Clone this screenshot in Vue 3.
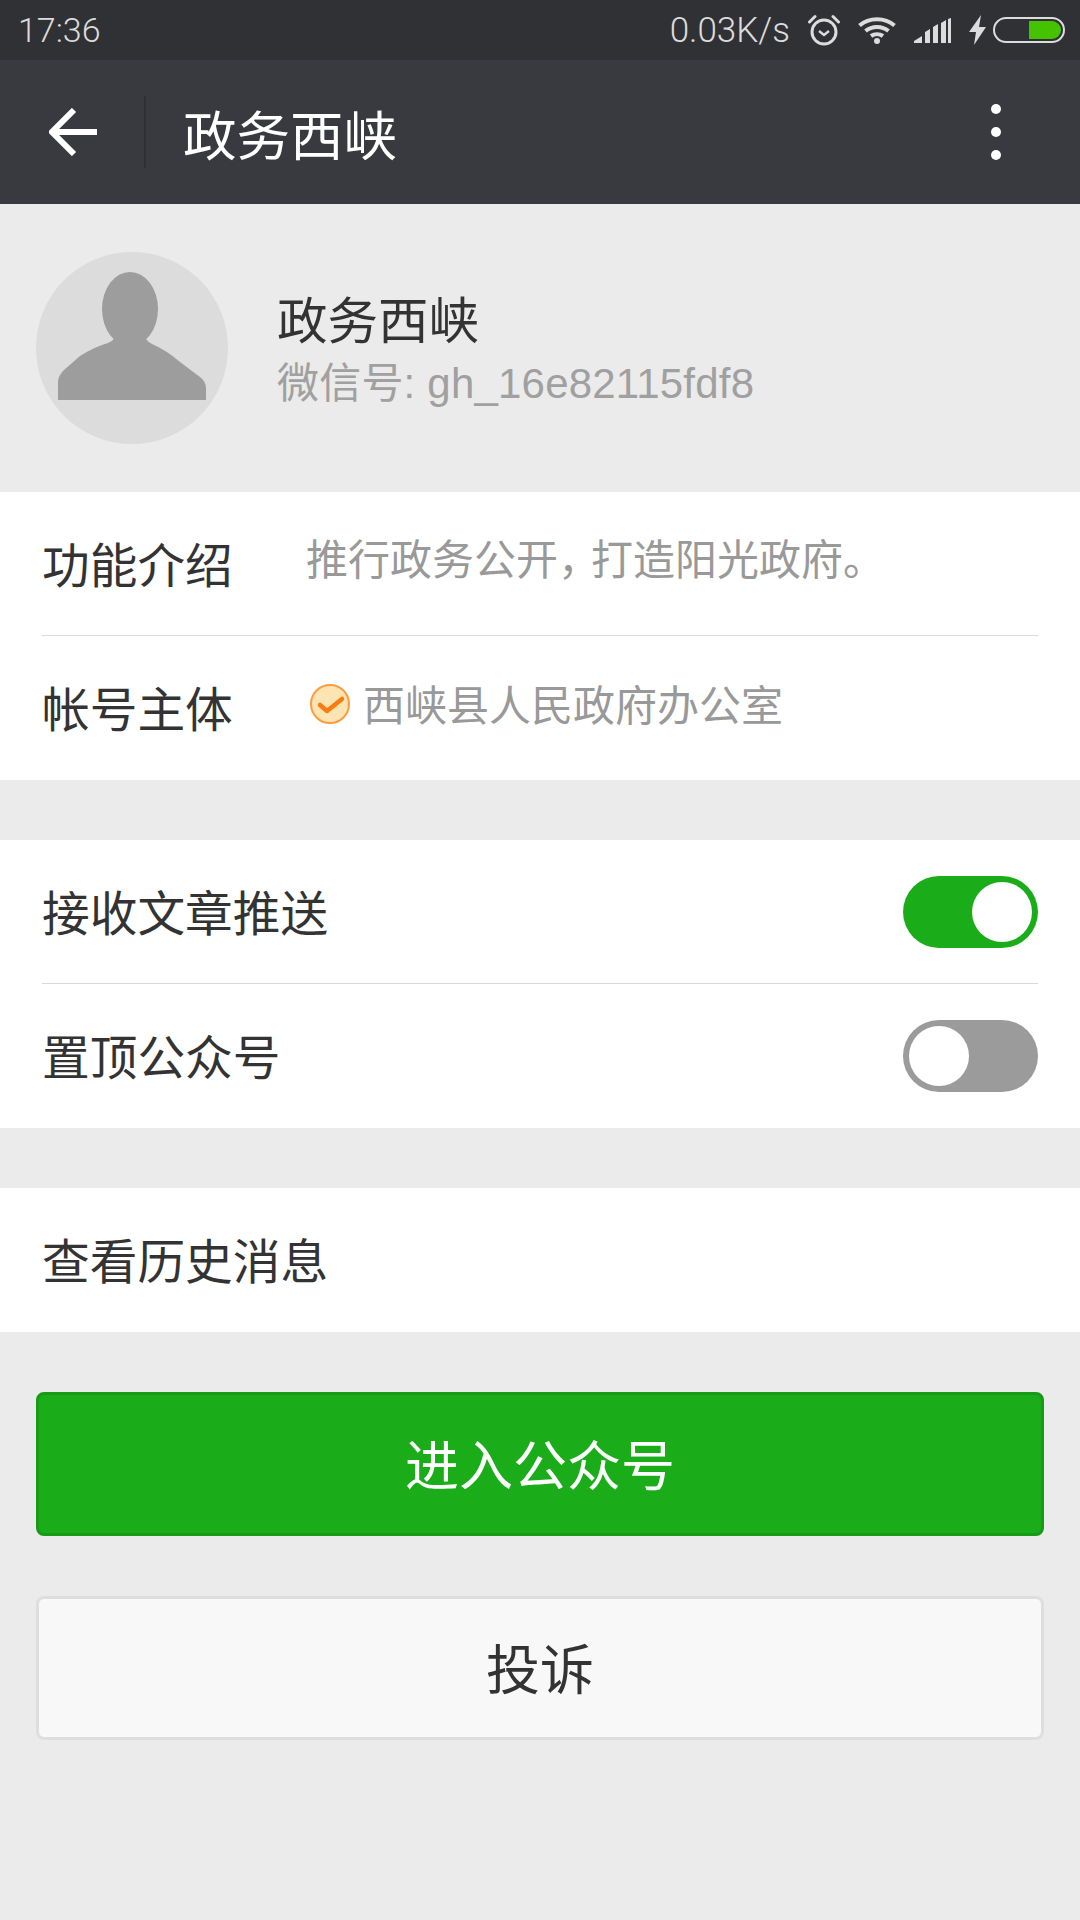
<template>
  <div class="page">
    <div class="statusbar">
      <span class="time">17:36</span>
      <span class="speed">0.03K/s</span>
      <svg class="alarm" width="32" height="32" viewBox="0 0 32 32" fill="none" stroke="#dcdcdc">
        <circle cx="16" cy="18" r="12" stroke-width="3" />
        <path d="M11 17l5 4 5-4" stroke-width="2.4" />
        <path d="M1.5 8 7 2.5M30.5 8 25 2.5" stroke-width="3" stroke-linecap="round" />
      </svg>
      <svg class="wifi" width="38" height="28" viewBox="0 0 38 28" fill="none" stroke="#dcdcdc" stroke-width="4">
        <path d="M1.5 9.5C11 1 27 1 36.500 9.500" />
        <path d="M7.500 15C14 9.500 24 9.500 30.500 15" />
        <path d="M13 20c3.500-2.500 8.500-2.500 12 0" />
        <circle cx="19" cy="25" r="3" fill="#dcdcdc" stroke="none" />
      </svg>
      <svg class="signal" width="37" height="25" viewBox="0 0 37 25" fill="#dcdcdc">
        <path d="M0 25v-2l8-5v7zM11 25V14l5-3v14zM19 25V9l5-3v19zM27 25V5l5-3v23zM34 25V1l3-1v25z" />
      </svg>
      <svg class="bolt" width="17" height="30" viewBox="0 0 17 30" fill="#dcdcdc">
        <path d="M12 0 0 17h7L5 30 17 12h-7z" />
      </svg>
      <div class="battery"><div class="battery-fill"></div></div>
    </div>

    <div class="toolbar">
      <div class="back">
        <svg width="48" height="48" viewBox="0 0 48 48" fill="none" stroke="#fff" stroke-width="6">
          <path d="M25 2 3 24l22 22" />
          <path d="M3 24h45" />
        </svg>
      </div>
      <div class="toolbar-sep"></div>
      <div class="toolbar-title">政务西峡</div>
      <div class="more">
        <i></i>
        <i></i>
        <i></i>
      </div>
    </div>

    <div class="profile">
      <svg class="avatar" width="192" height="192" viewBox="0 0 192 192">
        <circle cx="96" cy="96" r="96" fill="#dcdcdc" />
        <ellipse cx="94" cy="57" rx="28" ry="37" fill="#9d9d9d" />
        <path d="M22 148V130Q22 124 28 118L44 104Q58 95 72 91Q80 88 80 80H108Q108 88 116 92Q130 98 144 110L164 125Q170 130 170 136V148Z" fill="#9d9d9d" />
      </svg>
      <div class="profile-text">
        <div class="name">政务西峡</div>
        <div class="wxid">微信号: gh_16e82115fdf8</div>
      </div>
    </div>

    <div class="section">
      <div class="row info-row divided">
        <div class="label">功能介绍</div>
        <div class="value intro">推行政务公开<span class="comma">，</span>打造阳光政府。</div>
      </div>
      <div class="row info-row">
        <div class="label">帐号主体</div>
        <div class="value with-icon">
          <svg class="verified" width="40" height="40" viewBox="0 0 40 40" fill="none">
            <circle cx="20" cy="20" r="19" fill="#fde5b3" stroke="#fb9c40" stroke-width="2" />
            <path d="M10 21l7 6 15-12" stroke="#f97c12" stroke-width="4.500" stroke-linecap="round" stroke-linejoin="round" />
          </svg>
          西峡县人民政府办公室
        </div>
      </div>
    </div>

    <div class="section">
      <div class="row divided">
        <div class="label">接收文章推送</div>
        <div class="toggle on"><div class="knob"></div></div>
      </div>
      <div class="row">
        <div class="label">置顶公众号</div>
        <div class="toggle"><div class="knob"></div></div>
      </div>
    </div>

    <div class="section">
      <div class="row">
        <div class="label">查看历史消息</div>
      </div>
    </div>

    <div class="actions">
      <div class="btn primary"><span>进入公众号</span></div>
      <div class="btn plain"><span>投诉</span></div>
    </div>
  </div>
</template>

<script setup>
</script>

<style scoped>
.page {
  width: 1080px;
  height: 1920px;
  overflow: hidden;
  background: #ebebeb;
  font-family: "Noto Sans CJK SC", "Liberation Sans", sans-serif;
  color: #333;
}

.statusbar {
  height: 60px;
  background: #303135;
  display: flex;
  align-items: center;
  padding: 0 15px 0 18px;
  box-sizing: border-box;
  color: #dcdcdc;
  font-family: Roboto, "Liberation Sans", sans-serif;
  font-weight: 300;
  font-size: 34px;
}

.time {
  margin-right: auto;
}

.speed {
  margin-right: 18px;
  font-size: 35px;
}

.wifi {
  margin-left: 18px;
}

.signal {
  margin-left: 18px;
}

.bolt {
  margin-left: 18px;
}

.battery {
  width: 72px;
  height: 26px;
  margin-left: 7px;
  box-sizing: border-box;
  border: 2px solid #dcdcdc;
  border-radius: 13px;
  padding: 2px;
  display: flex;
  justify-content: flex-end;
}

.battery-fill {
  width: 32px;
  height: 18px;
  background: #45c300;
  border-radius: 0 9px 9px 0;
}

.toolbar {
  height: 144px;
  background: #393a3f;
  display: flex;
  align-items: center;
  box-sizing: border-box;
}

.back {
  width: 144px;
  padding-left: 49px;
  box-sizing: border-box;
  display: flex;
}

.toolbar-sep {
  width: 2px;
  height: 72px;
  background: #2f3034;
}

.toolbar-title {
  margin-left: 37px;
  font-size: 53.500px;
  color: #fff;
}

.more {
  margin-left: auto;
  margin-right: 79px;
  display: flex;
  flex-direction: column;
  gap: 13px;
}

.more i {
  display: block;
  width: 10px;
  height: 10px;
  border-radius: 50%;
  background: #fff;
}

.profile {
  height: 288px;
  display: flex;
  align-items: center;
  padding-left: 36px;
}

.avatar {
  flex: none;
}

.profile-text {
  margin-left: 49px;
  padding-top: 4px;
}

.name {
  font-size: 50.500px;
  line-height: 64px;
  color: #333;
}

.wxid {
  font-size: 42px;
  line-height: 62px;
  margin-top: 4px;
  letter-spacing: 0.200px;
  color: #a0a0a0;
  font-family: "Liberation Sans", "Noto Sans CJK SC", sans-serif;
}

.section {
  background: #fff;
  margin-bottom: 60px;
}

.row {
  height: 144px;
  padding: 0 42px;
  display: flex;
  align-items: center;
  justify-content: space-between;
  position: relative;
}

.divided::after {
  content: "";
  position: absolute;
  left: 42px;
  right: 42px;
  bottom: 0;
  height: 1px;
  background: #d9d9d9;
}

.info-row {
  justify-content: flex-start;
}

.label {
  font-size: 47.700px;
  color: #333;
  margin-top: -3px;
}

.info-row .label {
  width: 264px;
}

.value {
  font-size: 42px;
  color: #999;
  margin-top: -12px;
}

.intro {
  margin-top: -15px;
}

.comma {
  letter-spacing: -9px;
}

.with-icon {
  display: flex;
  align-items: center;
  gap: 13px;
  padding-left: 4px;
}

.verified {
  flex: none;
  margin-top: 3px;
}

.toggle {
  width: 135px;
  height: 72px;
  border-radius: 36px;
  background: #9b9b9b;
  padding: 6px;
  box-sizing: border-box;
  display: flex;
}

.toggle.on {
  background: #1aad19;
  justify-content: flex-end;
}

.knob {
  width: 60px;
  height: 60px;
  border-radius: 50%;
  background: #fff;
}

.actions {
  display: flex;
  flex-direction: column;
  gap: 60px;
  padding: 0 36px;
}

.btn {
  height: 144px;
  border-radius: 8px;
  box-sizing: border-box;
  display: flex;
  align-items: center;
  justify-content: center;
  font-size: 54px;
}

.btn span {
  margin-top: -4px;
}

.primary {
  background: #1aad19;
  border: 3px solid #179b16;
  color: #fff;
}

.plain {
  background: #f8f8f8;
  border: 3px solid #dedede;
  color: #333;
}
</style>

<style>
body {
  margin: 0;
  background: #ebebeb;
}
</style>
